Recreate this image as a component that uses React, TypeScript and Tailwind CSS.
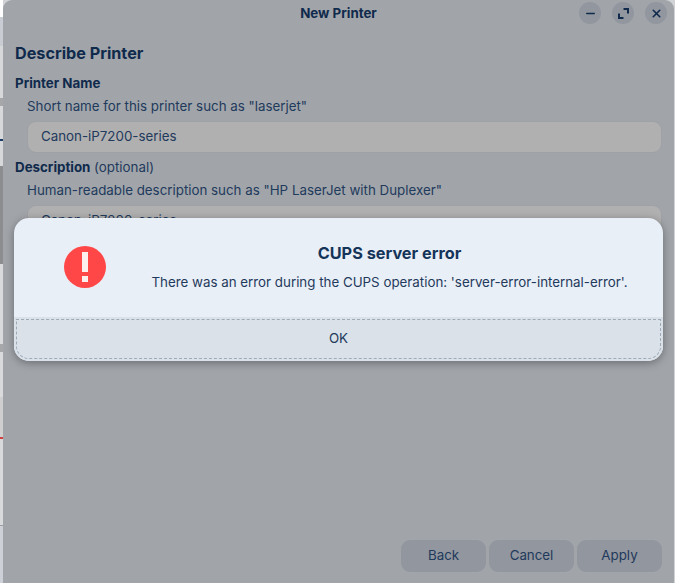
import { Minus, X } from 'lucide-react';

function Field({ value }: { value: string }) {
  return (
    <div className="ml-3 h-[32px] shrink-0 rounded-[9px] border border-[#9ea1a5] bg-[#b0b0b0] pl-[13px] text-[13.33px] leading-[29px] text-[#1f3a5c]">
      {value}
    </div>
  );
}

function WindowButton({ children }: { children: React.ReactNode }) {
  return (
    <div className="flex h-[22px] w-[22px] items-center justify-center rounded-full bg-[#92969e] text-[#102a4c]">
      {children}
    </div>
  );
}

function FooterButton({ label }: { label: string }) {
  return (
    <div className="flex h-8 w-[85px] items-center justify-center rounded-[9px] bg-[#92969e] text-[13.33px] text-[#1f3a5c]">
      {label}
    </div>
  );
}

export default function App() {
  return (
    <div className="relative flex h-[583px] w-[675px] overflow-hidden bg-[#d0d2d5] font-['Inter',sans-serif]">
      {/* desktop window peeking out behind the dialog */}
      <div className="flex w-[3px] shrink-0 flex-col">
        <div className="h-[17px] bg-white" />
        <div className="h-[29px] bg-[#c9ccd2]" />
        <div className="h-[52px] bg-[#d7d8da]" />
        <div className="h-[8px] bg-[#a6a7a9]" />
        <div className="h-[33px] bg-[#d7d8da]" />
        <div className="h-[2px] bg-[#1d3a66]" />
        <div className="h-[25px] bg-[#d7d8da]" />
        <div className="h-[98px] bg-[#8c8d8e]" />
        <div className="h-[80px] bg-[#d9dadb]" />
        <div className="h-[8px] bg-[#a6a7a9]" />
        <div className="h-[45px] bg-[#d9dadb]" />
        <div className="h-[40px] bg-[#cfcfcf]" />
        <div className="h-[2px] bg-[#d0403f]" />
        <div className="h-[86px] bg-[#d9dadb]" />
        <div className="h-px bg-[#9a9da1]" />
        <div className="h-[57px] bg-[#cdd0d6]" />
      </div>

      <div className="flex w-[671px] flex-col rounded-t-[9px] bg-[#a1a5aa]">
        <div className="relative flex h-[26px] shrink-0 items-center justify-center pt-[1px] text-[13.33px] font-bold text-[#102a4c]">
          New Printer
          <div className="absolute top-[2px] right-[7px] flex gap-[11px]">
            <WindowButton>
              <Minus size={13} strokeWidth={2.5} />
            </WindowButton>
            <WindowButton>
              <svg width="11" height="11" viewBox="0 0 11 11" fill="none" stroke="currentColor" strokeWidth="2">
                <path d="M5.5 1H10V5.5M1 5.5V10H5.5" />
              </svg>
            </WindowButton>
            <WindowButton>
              <X size={13} strokeWidth={3} />
            </WindowButton>
          </div>
        </div>

        <div className="flex flex-1 flex-col px-3 pb-[11px]">
          <h1 className="mt-[16px] text-[16.2px] leading-[22px] font-bold text-[#102a4c]">Describe Printer</h1>
          <div className="mt-[11px] text-[13.33px] leading-4 font-bold text-[#102a4c]">Printer Name</div>
          <div className="mt-[7px] ml-3 text-[13.33px] leading-4 text-[#1f3a5c]">
            Short name for this printer such as "laserjet"
          </div>
          <div className="mt-[7px]">
            <Field value="Canon-iP7200-series" />
          </div>
          <div className="mt-[6px] text-[13.33px] leading-4 text-[#1f3a5c]">
            <span className="font-bold text-[#102a4c]">Description</span> (optional)
          </div>
          <div className="mt-[7px] ml-3 text-[13.33px] leading-4 text-[#1f3a5c]">
            Human-readable description such as "HP LaserJet with Duplexer"
          </div>
          <div className="mt-[7px]">
            <Field value="Canon-iP7200-series" />
          </div>

          <div className="mt-auto flex justify-end gap-[3px]">
            <FooterButton label="Back" />
            <FooterButton label="Cancel" />
            <FooterButton label="Apply" />
          </div>
        </div>
      </div>

      {/* modal error dialog */}
      <div className="absolute top-[218px] left-[14px] flex h-[143px] w-[649px] flex-col overflow-hidden rounded-[15px] bg-[#e9eff7] shadow-[0_2px_8px_rgba(0,0,0,0.35)]">
        <div className="flex h-[99px] shrink-0">
          <div className="flex w-[92px] shrink-0 justify-end pt-[28px]">
            <svg width="42" height="42" viewBox="0 0 42 42">
              <circle cx="21" cy="21" r="21" fill="#ff4747" />
              <rect x="18" y="6" width="6" height="20" fill="#fdeeee" />
              <rect x="18" y="30" width="6" height="6" fill="#fdeeee" />
            </svg>
          </div>
          <div className="flex flex-1 flex-col items-center pt-[25px] pl-[10px]">
            <div className="text-[16.3px] leading-5 font-bold text-[#14345a]">CUPS server error</div>
            <div className="mt-[11px] text-[13.33px] leading-4 text-[#1f3a5c]">
              There was an error during the CUPS operation: 'server-error-internal-error'.
            </div>
          </div>
        </div>
        <div className="flex flex-1 bg-[#dae1e8] p-[2px]">
          <div className="flex flex-1 items-center justify-center rounded-b-[13px] border border-dashed border-[#9eaab8] text-[13.33px] text-[#1f3a5c]">
            OK
          </div>
        </div>
      </div>
    </div>
  );
}
